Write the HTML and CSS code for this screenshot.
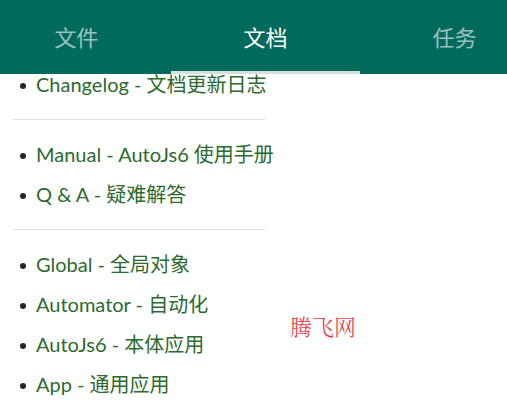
FILE: index.html
```html
<!DOCTYPE html>
<html lang="zh-CN">
<head>
<meta charset="utf-8">
<title>文档</title>
<link rel="stylesheet" href="styles.css">
</head>
<body>
<header class="appbar">
  <nav class="tabs">
    <div class="tab">文件</div>
    <div class="tab active">文档</div>
    <div class="tab">任务</div>
  </nav>
</header>
<main class="doc">
  <ul class="list">
    <li>Changelog - 文档更新日志</li>
  </ul>
  <hr class="rule">
  <ul class="list">
    <li>Manual - AutoJs6 使用手册</li>
    <li>Q &amp; A - 疑难解答</li>
  </ul>
  <hr class="rule">
  <ul class="list">
    <li>Global - 全局对象</li>
    <li>Automator - 自动化</li>
    <li>AutoJs6 - 本体应用</li>
    <li>App - 通用应用</li>
  </ul>
</main>
<div class="watermark">腾飞网</div>
</body>
</html>
```

FILE: styles.css
```css
html, body {
  margin: 0;
  padding: 0;
  background: #ffffff;
  width: 507px;
  height: 408px;
  overflow: hidden;
}
body {
  font-family: Lato, "Noto Sans CJK SC", sans-serif;
}
.appbar {
  position: fixed;
  top: 0;
  left: 0;
  right: 0;
  height: 74px;
  background: #016a5d;
  overflow: hidden;
  z-index: 2;
}
.tabs {
  display: flex;
  margin-left: -18px;
  height: 74px;
}
.tab {
  flex: 0 0 189px;
  display: flex;
  align-items: center;
  justify-content: center;
  font-family: "Noto Sans CJK SC", sans-serif;
  font-size: 22px;
  color: rgba(255, 255, 255, 0.62);
  box-sizing: border-box;
  padding-bottom: 2px;
}
.tab.active {
  color: #ffffff;
  border-bottom: 3px solid #d5dfdc;
  padding-bottom: 0;
}
.doc {
  padding-top: 65px;
}
.list {
  list-style: none;
  margin: 0;
  padding: 0 0 0 36px;
}
.list li {
  position: relative;
  height: 40px;
  line-height: 38px;
  font-size: 20px;
  color: #2c6a2e;
  white-space: nowrap;
}
.list li::before {
  content: "";
  position: absolute;
  left: -16px;
  top: 18px;
  width: 6px;
  height: 6px;
  border-radius: 50%;
  background: #262626;
}
.rule {
  border: none;
  height: 1px;
  background: #e0e0e0;
  width: 252px;
  margin: 14px 0 15px 13px;
}
.watermark {
  position: absolute;
  left: 290px;
  top: 310px;
  font-family: "Noto Serif CJK SC", "Noto Sans CJK SC", serif;
  font-weight: 300;
  font-size: 22px;
  color: #e53a44;
}
```
